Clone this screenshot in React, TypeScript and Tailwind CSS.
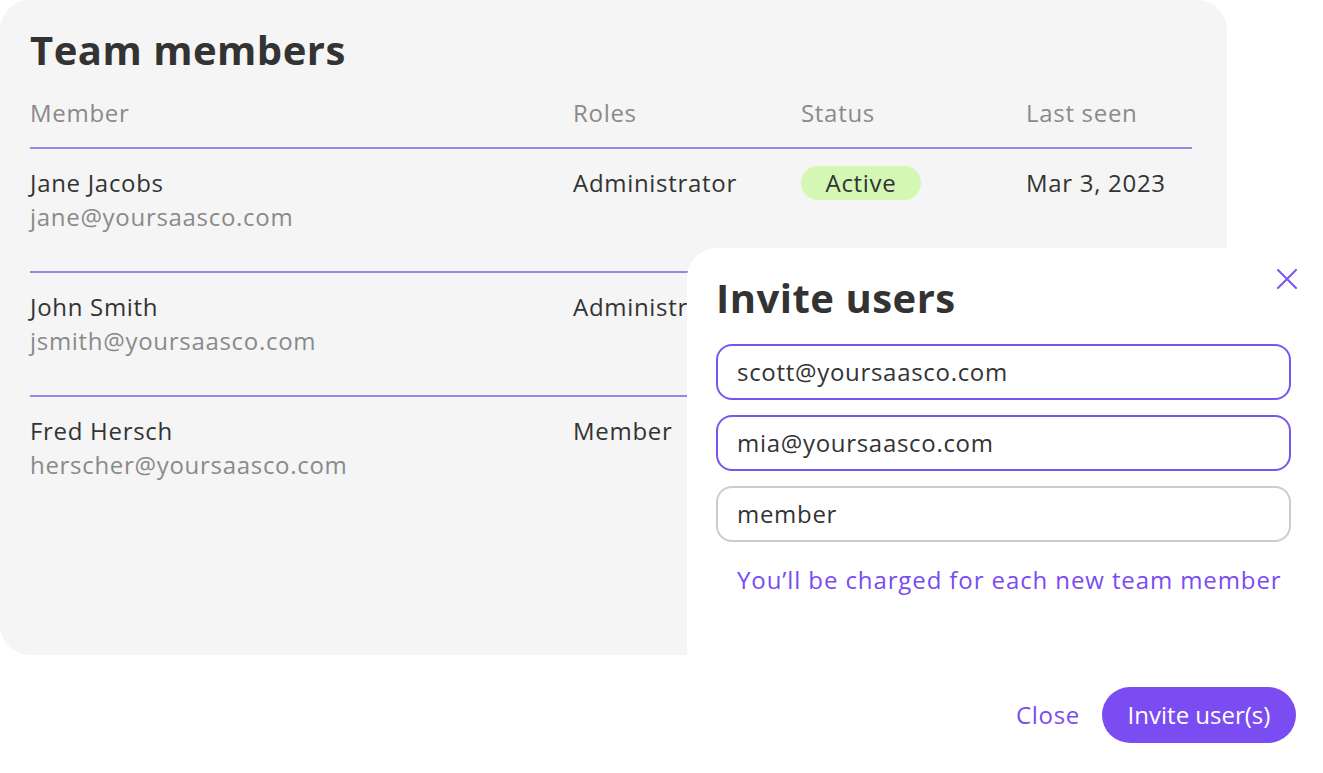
import React from 'react';

type Member = {
  name: string;
  email: string;
  role: string;
  status?: string;
  lastSeen?: string;
};

const members: Member[] = [
  { name: 'Jane Jacobs', email: 'jane@yoursaasco.com', role: 'Administrator', status: 'Active', lastSeen: 'Mar 3, 2023' },
  { name: 'John Smith', email: 'jsmith@yoursaasco.com', role: 'Administrator' },
  { name: 'Fred Hersch', email: 'herscher@yoursaasco.com', role: 'Member' },
];

const font = { fontFamily: '"Open Sans", Lato, sans-serif' };

const App: React.FC = () => {
  return (
    <div className="relative w-[1323px] h-[773px] overflow-hidden bg-white text-[#333] tracking-[0.7px]" style={font}>
      {/* Team members card */}
      <div className="w-[1227px] h-[655px] bg-[#f5f5f5] rounded-[30px] pl-[30px] pt-[26px]">
        <h1 className="text-[40px] leading-[48px] font-bold tracking-[0.5px] text-[#333]">Team members</h1>

        <div className="w-[1162px] mt-[22px]">
          <div className="grid grid-cols-[543px_228px_225px_1fr] text-[24px] leading-[34px] text-[#8a8a8a] pb-[17px] border-b-2 border-[#9d85e6]">
            <div>Member</div>
            <div>Roles</div>
            <div>Status</div>
            <div>Last seen</div>
          </div>

          {members.map((m, i) => (
            <div
              key={m.email}
              className={`grid grid-cols-[543px_228px_225px_1fr] text-[24px] leading-[34px] pt-[17px] pb-[37px] ${i < members.length - 1 ? 'border-b-2 border-[#9d85e6]' : ''}`}
            >
              <div>
                <div className="text-[#333]">{m.name}</div>
                <div className="text-[#8a8a8a]">{m.email}</div>
              </div>
              <div className="text-[#333]">{m.role}</div>
              <div>
                {m.status && (
                  <span className="inline-flex items-center justify-center w-[120px] h-[34px] rounded-full bg-[#d4f7b3] text-[#333]">
                    {m.status}
                  </span>
                )}
              </div>
              <div className="text-[#333]">{m.lastSeen}</div>
            </div>
          ))}
        </div>
      </div>

      {/* Invite users modal */}
      <div className="absolute left-[687px] top-[248px] w-[636px] h-[525px] bg-white rounded-tl-[30px] pl-[29px] pr-[32px] pt-[26px] flex flex-col">
        <button className="absolute left-[590px] top-[21px] w-[20px] h-[20px] text-[#7a55ee]" aria-label="close">
          <svg viewBox="0 0 20 20" width="20" height="20" fill="none" stroke="currentColor" strokeWidth="2" strokeLinecap="round">
            <path d="M1 1L19 19M19 1L1 19" />
          </svg>
        </button>

        <h2 className="text-[40px] leading-[48px] font-bold tracking-[0.5px] text-[#333]">Invite users</h2>

        <div className="mt-[22px] flex flex-col gap-[15px]">
          <div className="h-[56px] w-[575px] rounded-[16px] border-2 border-[#7b55f0] px-[19px] flex items-center text-[24px] text-[#333]">
            scott@yoursaasco.com
          </div>
          <div className="h-[56px] w-[575px] rounded-[16px] border-2 border-[#7b55f0] px-[19px] flex items-center text-[24px] text-[#333]">
            mia@yoursaasco.com
          </div>
          <div className="h-[56px] w-[575px] rounded-[16px] border-2 border-[#cccccc] px-[19px] flex items-center text-[24px] text-[#333]">
            member
          </div>
        </div>

        <p className="mt-[21px] pl-[21px] text-[24px] leading-[34px] tracking-[0.9px] text-[#7a4cf0]">You’ll be charged for each new team member</p>

        <div className="mt-[90px] flex justify-end items-center gap-[22px] -mr-[5px]">
          <button className="text-[24px] text-[#7a4cf0]">Close</button>
          <button className="h-[56px] w-[194px] rounded-full bg-[#7a4cf2] text-white text-[24px] tracking-[0px]">Invite user(s)</button>
        </div>
      </div>
    </div>
  );
};

export default App;
